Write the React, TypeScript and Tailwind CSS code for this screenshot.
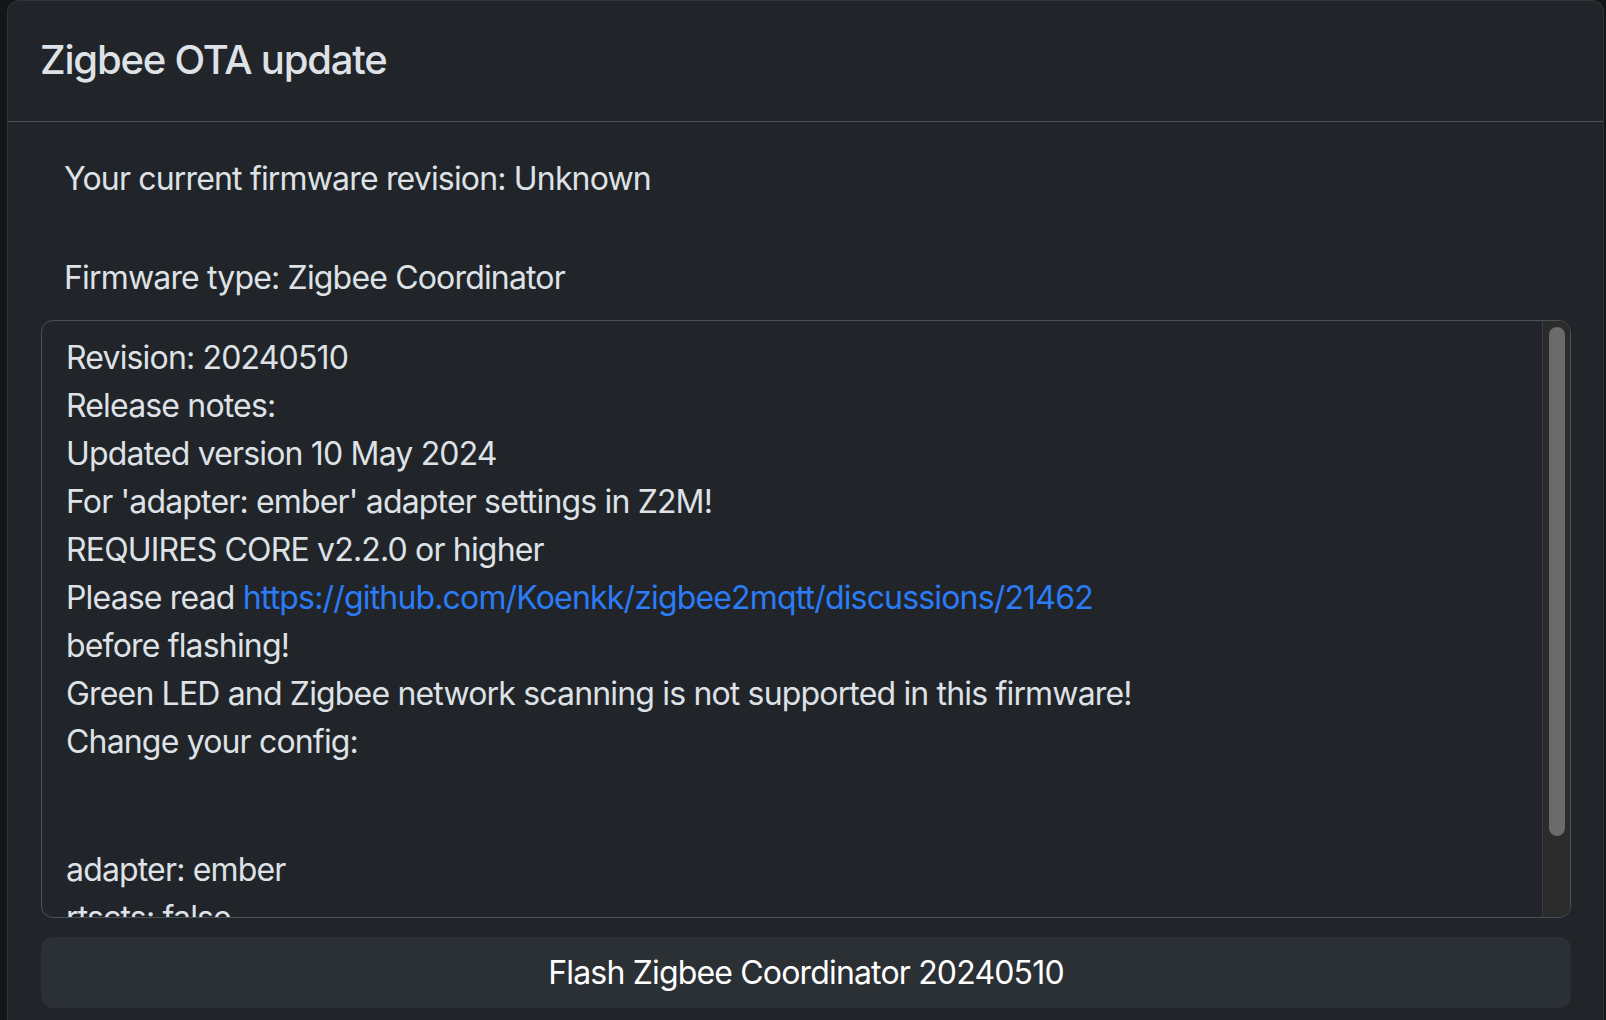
import React from 'react'

const NOTES_TOP = [
  'Revision: 20240510',
  'Release notes:',
  'Updated version 10 May 2024',
  "For 'adapter: ember' adapter settings in Z2M!",
  'REQUIRES CORE v2.2.0 or higher',
]

const NOTES_BOTTOM = [
  'before flashing!',
  'Green LED and Zigbee network scanning is not supported in this firmware!',
  'Change your config:',
]

const CONFIG = ['adapter: ember', 'rtscts: false']

export default function App() {
  return (
    <div
      className="w-[1606px] h-[1020px] overflow-hidden bg-[#141517] pl-[7px] pr-[2px] text-[#dee2e6]"
      style={{ fontFamily: 'Inter, "Noto Sans", sans-serif' }}
    >
      <div className="h-[1040px] bg-[#212529] rounded-t-[12px] border-l border-r border-t border-[#30343a] flex flex-col">
        {/* Header */}
        <div className="h-[121px] shrink-0 border-b border-[#495057] flex items-center pl-[32px] pb-[3px]">
          <h5 className="text-[40px] leading-[60px] font-medium tracking-[-0.03em]">Zigbee OTA update</h5>
        </div>

        {/* Body */}
        <div className="flex flex-col pt-[33px] pl-[33px] pr-[32px] text-[32px] leading-[48px] tracking-[-0.026em]">
          <p className="pl-[23px]">Your current firmware revision: Unknown</p>
          <p className="pl-[23px] mt-[51px]">Firmware type: Zigbee Coordinator</p>

          <div className="mt-[18px] h-[598px] border border-[#495057] rounded-[12px] flex overflow-hidden">
            <div className="flex-1 overflow-hidden pl-[24px] pt-[13px]">
              {NOTES_TOP.map(line => (
                <div key={line}>{line}</div>
              ))}
              <div>
                Please read{' '}
                <a href="#" className="text-[#2b7cf6]">
                  https://github.com/Koenkk/zigbee2mqtt/discussions/21462
                </a>
              </div>
              {NOTES_BOTTOM.map(line => (
                <div key={line}>{line}</div>
              ))}
              <div className="h-[80px]" />
              {CONFIG.map(line => (
                <div key={line}>{line}</div>
              ))}
            </div>

            {/* scrollbar */}
            <div className="w-[28px] shrink-0 bg-[#2b2b2b] border-l border-[#3c3c3c] pt-[6px] pl-[6px]">
              <div className="w-[16px] h-[509px] rounded-full bg-[#6b6b6b]" />
            </div>
          </div>

          <button className="mt-[19px] h-[71px] rounded-[12px] bg-[#2b3035] text-white">
            Flash Zigbee Coordinator 20240510
          </button>
        </div>
      </div>
    </div>
  )
}
